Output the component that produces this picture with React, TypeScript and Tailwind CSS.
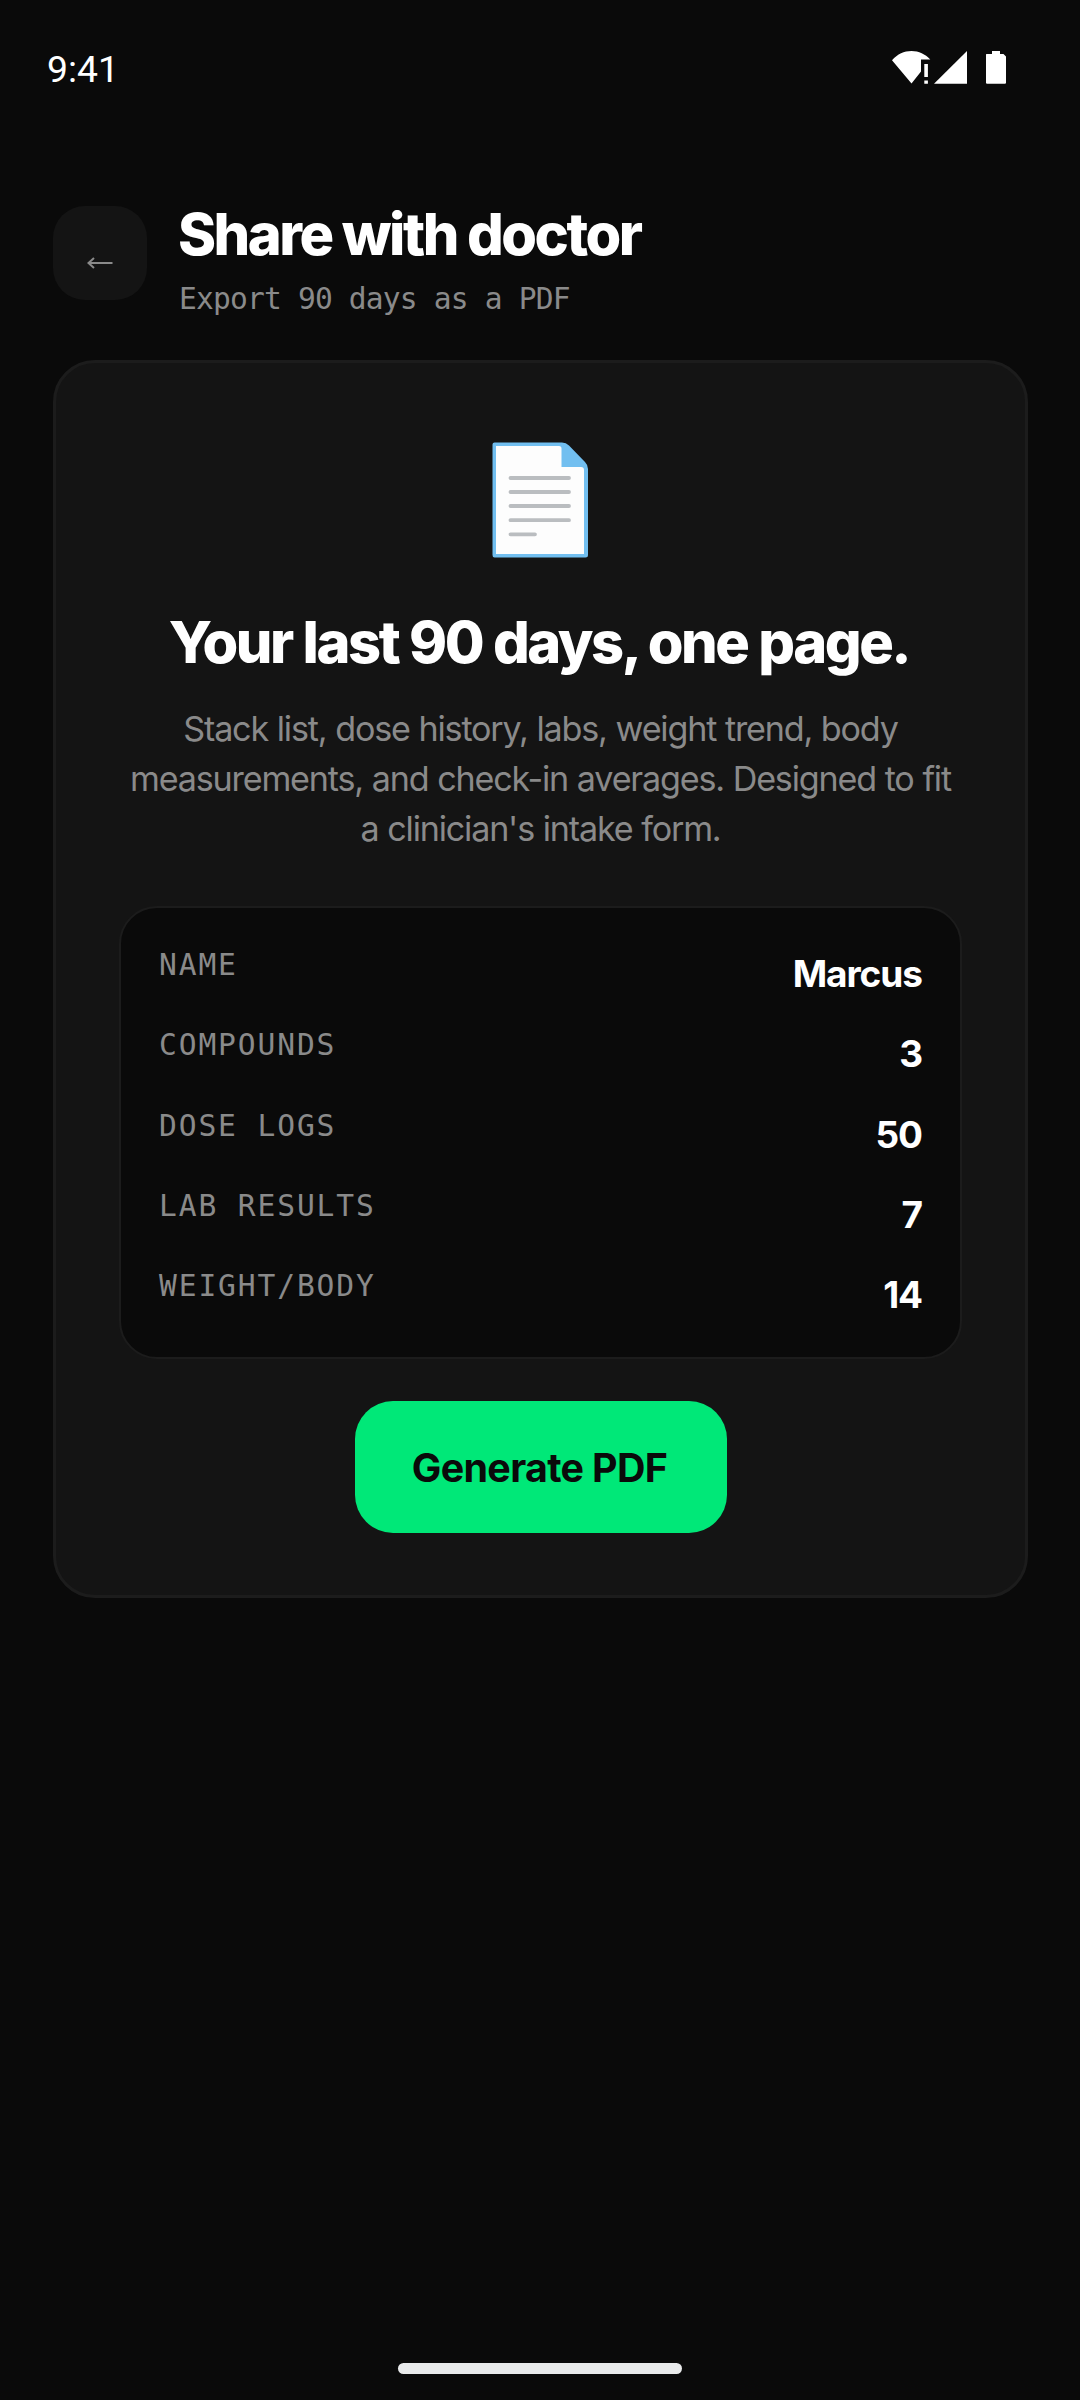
import React from "react";

interface SummaryRow {
  label: string;
  value: string;
}

const rows: SummaryRow[] = [
  { label: "NAME", value: "Marcus" },
  { label: "COMPOUNDS", value: "3" },
  { label: "DOSE LOGS", value: "50" },
  { label: "LAB RESULTS", value: "7" },
  { label: "WEIGHT/BODY", value: "14" },
];

// wifi, signal and battery glyphs
function StatusIcons() {
  return (
    <svg width="116" height="36" viewBox="0 0 116 36" fill="#fff">
      <path d="M0 10.2C5.5 4 12 1 19.5 1S33 4 38.3 9.5H29v12L19.5 33.5Z" />
      <path d="M32.3 14h3.6v13h-3.6zM32.3 30.4h3.6v3.3h-3.6z" />
      <path d="M42 33.7 75 1v32.7z" />
      <path d="M94 4.5q0-.5.5-.5H100V1h8v3h3.5l2.5 2.5V33l-.7.7H94.7L94 33z" />
    </svg>
  );
}

function StatusBar() {
  return (
    <div className="flex h-[138px] items-start justify-between pt-[50px] pr-[72px] pl-[47px]">
      <span className="-mt-px font-[Roboto,sans-serif] text-[37.3px] leading-[41px] text-white">
        9:41
      </span>
      <StatusIcons />
    </div>
  );
}

function BackButton() {
  return (
    <button
      aria-label="Back"
      className="flex h-[94px] w-[94px] items-center justify-center rounded-[32px] bg-[#141414] pt-[19px]"
    >
      <svg width="26" height="12" viewBox="0 0 26 12" fill="none" stroke="#8a8a8a">
        <path d="M1.5 6H25.5" strokeWidth="2" />
        <path d="M7 1 1.5 6 7 11" strokeWidth="2" />
      </svg>
    </button>
  );
}

function Header() {
  return (
    <header className="flex items-start gap-[31px] px-[53px] pt-[68px]">
      <BackButton />
      <div>
        <h1 className="-mt-px text-[57.75px] leading-[58px] font-extrabold tracking-[-2.5px] text-white">
          Share with doctor
        </h1>
        <p className="mt-[20px] pl-px font-['DejaVu_Sans_Mono',monospace] text-[29.6px] leading-[32px] tracking-[-0.83px] text-[#8a8a8a]">
          Export 90 days as a PDF
        </p>
      </div>
    </header>
  );
}

function DocumentIcon() {
  return (
    <svg width="97" height="116" viewBox="0 0 97 116">
      <path
        d="M2.5.5H70q4 0 7 3L93 20q3 3 3 7v86q0 2.5-2.5 2.5h-91Q.5 115.5.5 113V2.5q0-2 2-2z"
        fill="#72bff0"
      />
      <path d="M4 4h63q2.5 0 2.5 2.5V25H89q3 0 3 3v84H4z" fill="#fdfdfd" />
      <path
        d="M18.5 36H77M18.5 50H77M18.5 64H77M18.5 78.2H77M18.5 92.3H43"
        stroke="#babdc0"
        strokeWidth="3.8"
        strokeLinecap="round"
      />
    </svg>
  );
}

function SummaryTable() {
  return (
    <dl className="mt-[52px] flex h-[453px] w-full flex-col rounded-[38px] border-[2.6px] border-[#1c1c1c] bg-[#0a0a0a] px-[38px] pt-[38px]">
      {rows.map((row) => (
        <div key={row.label} className="flex h-[80.3px] items-start justify-between">
          <dt className="font-['DejaVu_Sans_Mono',monospace] text-[29.6px] leading-[38px] tracking-[1.88px] text-[#8a8a8a]">
            {row.label}
          </dt>
          <dd className="pt-[3px] text-[37px] leading-[50px] font-bold tracking-[-1.05px] text-white">
            {row.value}
          </dd>
        </div>
      ))}
    </dl>
  );
}

export default function App() {
  return (
    <div className="flex h-[2400px] w-[1080px] flex-col bg-[#0a0a0a] font-[Inter,sans-serif]">
      <StatusBar />
      <Header />
      <main className="mt-[45px] mr-[52px] ml-[53px] flex h-[1238px] flex-col items-center rounded-[42px] border-[3px] border-[#1c1c1c] bg-[#141414] px-[63px] pt-[79px] text-center">
        <DocumentIcon />
        <h2 className="mt-[49px] pr-[3px] text-[57.75px] leading-[70px] font-extrabold tracking-[-2.45px] [word-spacing:0.5px] text-white">
          Your last 90 days, one page.
        </h2>
        <p className="mt-[27px] text-[34.125px] leading-[50px] tracking-[-1.18px] [word-spacing:0.4px] text-[#8a8a8a]">
          Stack list, dose history, labs, weight trend, body measurements, and
          check-in averages. Designed to fit a clinician's intake form.
        </p>
        <SummaryTable />
        <button className="mt-[42px] h-[132px] w-[372px] rounded-[38px] bg-[#00e878] pt-[3px] pr-[2px] text-[39.4px] font-bold tracking-[-0.65px] text-[#0a0a0a]">
          Generate PDF
        </button>
      </main>
      {/* gesture bar */}
      <div className="mx-auto mt-auto mb-[26px] h-[11px] w-[284px] rounded-full bg-[#e9eaeb]" />
    </div>
  );
}
